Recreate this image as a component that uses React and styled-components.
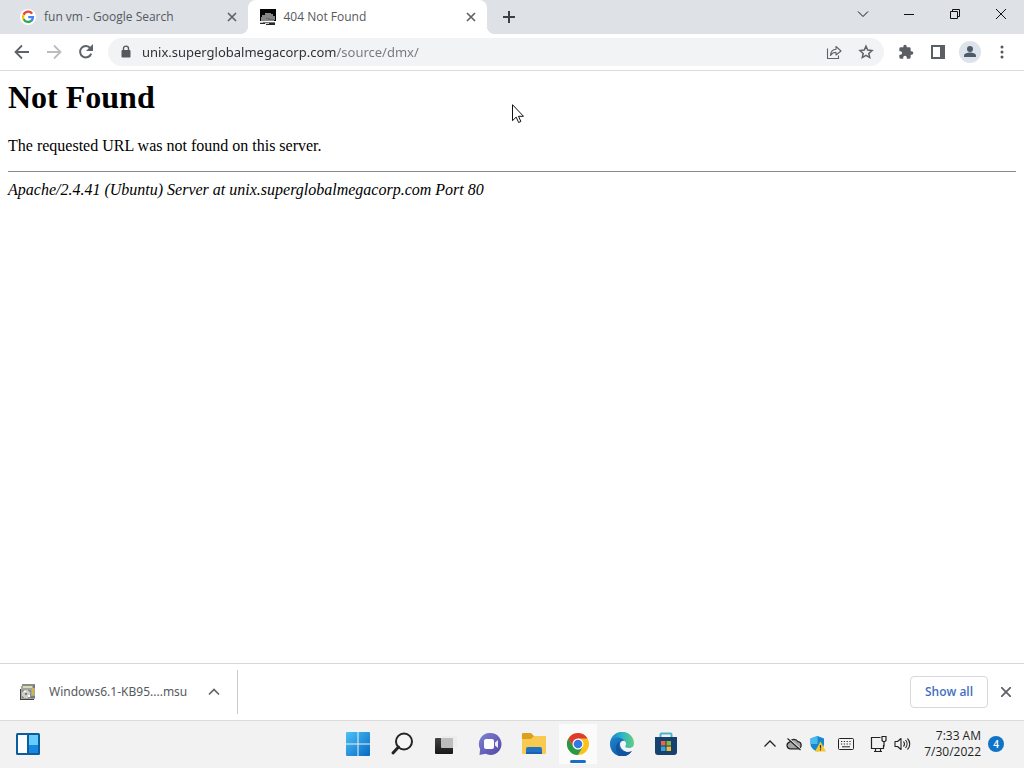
import React from "react";
import styled, { createGlobalStyle, css } from "styled-components";

const uiFont = `"Open Sans", "Noto Sans", sans-serif`;
const wideFont = `"Noto Sans", "Open Sans", sans-serif`;

const GlobalStyle = createGlobalStyle`
  *, *::before, *::after { box-sizing: border-box; }
  body { margin: 0; background: #fff; }
  button, input { font: inherit; color: inherit; }
  svg { display: block; flex: none; }
`;

const Screen = styled.div`
  display: flex;
  flex-direction: column;
  min-height: 100vh;
  font-family: ${uiFont};
  font-size: 12px;
  line-height: 16px;
  color: #3c4043;
`;

const IconButton = styled.button`
  display: flex;
  flex: none;
  align-items: center;
  justify-content: center;
  width: ${(p) => p.$w || 32}px;
  height: ${(p) => p.$h || 28}px;
  padding: 0;
  border: 0;
  border-radius: 4px;
  background: none;
  color: ${(p) => p.$color || "#5f6368"};
`;

/* ---------- tab strip ---------- */

const TabStrip = styled.header`
  display: flex;
  height: 34px;
  padding-left: 8px;
  background: #dee1e6;
`;

const Tabs = styled.div`
  display: flex;
  flex: 0 1 479px;
  min-width: 0;
`;

const Tab = styled.div`
  position: relative;
  display: flex;
  flex: 1 1 0;
  align-items: center;
  min-width: 0;
  padding: 0 6px 0 12px;
  border-radius: 8px 8px 0 0;
  ${(p) =>
    p.$active &&
    css`
      background: #fff;
      &::before,
      &::after {
        content: "";
        position: absolute;
        bottom: 0;
        width: 8px;
        height: 8px;
      }
      &::before {
        right: 100%;
        background: radial-gradient(circle at 0 0, transparent 8px, #fff 8px);
      }
      &::after {
        left: 100%;
        background: radial-gradient(circle at 100% 0, transparent 8px, #fff 8px);
      }
    `}
`;

const TabLabel = styled.button`
  display: flex;
  flex: 1;
  align-items: center;
  gap: 8px;
  min-width: 0;
  height: 34px;
  padding: 0;
  border: 0;
  background: none;
  color: #55595e;
  white-space: nowrap;
`;

const WindowControls = styled.div`
  display: flex;
  margin-left: auto;
`;

/* ---------- toolbar ---------- */

const Toolbar = styled.nav`
  display: flex;
  align-items: center;
  height: 37px;
  padding: 0 6px;
  border-bottom: 1px solid #dadce0;
  background: #fff;
`;

const Omnibox = styled.label`
  display: flex;
  flex: 1;
  align-items: center;
  min-width: 0;
  height: 28px;
  margin: 0 6px;
  padding: 0 2px 0 13px;
  border-radius: 14px;
  background: #f1f3f4;
`;

const UrlInput = styled.input`
  flex: 1;
  min-width: 0;
  height: 28px;
  margin-left: 11px;
  padding: 0;
  border: 0;
  outline: 0;
  font-family: ${wideFont};
  font-size: 13px;
  color: transparent;
  background: linear-gradient(90deg, #2c2e31 194px, #73787d 194px);
  -webkit-background-clip: text;
  background-clip: text;
`;

/* ---------- page ---------- */

const Page = styled.main`
  position: relative;
  flex: 1;
  padding: 8px;
  background: #fff;
  color: #000;
  font-family: "Liberation Serif", serif;
  font-size: 16px;
  line-height: 18px;
`;

const Title = styled.h1`
  margin: 0 0 21px;
  font-size: 32px;
  line-height: 37px;
`;

const Message = styled.p`
  margin: 0 0 16px;
`;

const Rule = styled.hr`
  height: 1px;
  margin: 0 0 9px;
  border: 0;
  background: #8a8a8a;
`;

const Pointer = styled.svg`
  position: absolute;
  left: 512px;
  top: 33px;
`;

/* ---------- download shelf ---------- */

const Shelf = styled.section`
  display: flex;
  align-items: center;
  height: 57px;
  padding: 0 2px 0 20px;
  border-top: 1px solid #d5d7da;
  background: #fff;
`;

const Download = styled.div`
  display: flex;
  align-items: center;
  height: 44px;
  padding-right: 7px;
  border-right: 1px solid #c8cacd;
`;

const FileButton = styled.button`
  display: flex;
  align-items: center;
  gap: 13px;
  height: 32px;
  margin-right: 11px;
  padding: 0;
  border: 0;
  background: none;
  color: #55595e;
  font-family: ${wideFont};
`;

const ShowAll = styled.button`
  width: 78px;
  height: 32px;
  margin-left: auto;
  margin-right: 2px;
  padding: 0;
  border: 1px solid #d5d8dc;
  border-radius: 4px;
  background: #fff;
  color: #4470c0;
  font-weight: 600;
`;

/* ---------- taskbar ---------- */

const Taskbar = styled.footer`
  display: grid;
  grid-template-columns: 1fr auto 1fr;
  align-items: center;
  height: 48px;
  box-shadow: inset 0 1px #dcdcdc;
  background: #f2f2f2;
`;

const Start = styled.div`
  padding-left: 6px;
`;

const Apps = styled.div`
  display: flex;
`;

const AppButton = styled(IconButton)`
  position: relative;
  width: 44px;
  height: 48px;
  ${(p) =>
    p.$active &&
    css`
      background: linear-gradient(#fbfbfb, #fbfbfb) center / 38px 40px no-repeat;
      &::after {
        content: "";
        position: absolute;
        bottom: 5px;
        width: 16px;
        height: 3px;
        border-radius: 2px;
        background: #1a6fc4;
      }
    `}
`;

const Tray = styled.div`
  display: flex;
  align-items: center;
  justify-content: flex-end;
  padding-right: 20px;
`;

const Clock = styled.button`
  margin: 0 7px 0 14px;
  padding: 0;
  border: 0;
  background: none;
  color: #1f1f1f;
  font-size: 12px;
  line-height: 16px;
  text-align: right;
  white-space: nowrap;
`;

const Badge = styled.button`
  width: 16px;
  height: 16px;
  padding: 0;
  border: 0;
  border-radius: 8px;
  background: #0f74c8;
  color: #fff;
  font-size: 10px;
  font-weight: 600;
  line-height: 16px;
`;

/* ---------- drawings ---------- */

const Stroke = ({ d, s = 16, w = 1, children, ...rest }) => (
  <svg width={s} height={s} viewBox={`0 0 ${s} ${s}`} fill="none" stroke="currentColor" strokeWidth={w} {...rest}>
    <path d={d} />
    {children}
  </svg>
);

const CloseIcon = () => <Stroke s={10} w={1.7} d="M1 1l8 8M9 1l-8 8" />;

const GoogleIcon = () => (
  <svg width="16" height="16" viewBox="0 0 16 16">
    <circle cx="8" cy="8" r="8" fill="#fff" />
    <g fill="none" strokeWidth="2.3">
      <path d="M12.2 4.6A5 5 0 0 0 3.6 5.8" stroke="#ea4335" />
      <path d="M3.6 5.7a5 5 0 0 0 0 4.7" stroke="#fbbc05" />
      <path d="M3.6 10.3a5 5 0 0 0 7.8 1.4" stroke="#34a853" />
      <path d="M11.3 11.8A5 5 0 0 0 13 8.1H8.2" stroke="#4285f4" />
    </g>
  </svg>
);

const CloudFavicon = () => (
  <svg width="16" height="16" viewBox="0 0 16 16" shapeRendering="crispEdges">
    <path d="M0 0h16v12H0z" fill="#050505" />
    <path d="M5 4h6v1h2v2h2v4h-1v1H1V8h1V6h3z" fill="#858585" />
    <path d="M6 9h4v1h4v1H8v-1H6z" fill="#6c6c6c" />
    <path d="M0 12h5v1H0z" fill="#eee" />
    <path d="M2 13h13v1H2z" fill="#777" />
    <path d="M0 14h5v1H0zM6 14h9v2H6z" fill="#282828" />
    <path d="M0 13h3v1H0zM5 14h4v1H5z" fill="#ccc" />
  </svg>
);

const ReloadIcon = () => (
  <Stroke w={2} d="M13.2 9.6A5.7 5.7 0 1 1 12.4 4.3L13.5 5.5">
    <path d="M15 0v7H8z" fill="currentColor" stroke="none" />
  </Stroke>
);

const LockIcon = () => (
  <svg width="10" height="14" viewBox="0 0 10 14">
    <rect x=".5" y="5" width="9" height="7.500" rx="1" fill="#55595e" />
    <path d="M2.500 6V3.600a2.500 2.500 0 0 1 5 0V6" fill="none" stroke="#55595e" strokeWidth="1.400" />
  </svg>
);

const ShareIcon = () => (
  <Stroke w={1.1} d="M1.500 4.500v10h11v-3">
    <path d="M4.500 11.500c.3-4 2.500-6 5.500-6.200V2.500L15 7l-5 4V8.300c-2.500 0-4 .8-5.500 3.200z" strokeLinejoin="round" />
  </Stroke>
);

const StarIcon = () => (
  <Stroke w={1.5} d="M8 2.200l1.700 3.900 4.300.4-3.200 2.900.9 4.200L8 11.400l-3.700 2.200.9-4.200L2 6.500l4.300-.4z" />
);

const PuzzleIcon = () => (
  <svg width="16" height="16" viewBox="0 0 24 24" fill="#5b5f64">
    <path d="M20.500 11H19V7a2 2 0 0 0-2-2h-4V3.500a2.500 2.500 0 0 0-5 0V5H4a2 2 0 0 0-2 2v3.800h1.500a2.700 2.700 0 0 1 0 5.400H2V20a2 2 0 0 0 2 2h3.800v-1.500a2.700 2.700 0 0 1 5.400 0V22H17a2 2 0 0 0 2-2v-4h1.500a2.500 2.500 0 0 0 0-5z" />
  </svg>
);

const PanelIcon = () => (
  <svg width="14" height="14" viewBox="0 0 14 14">
    <path d="M1 1h12v12H1z" fill="#fff" stroke="#5b5f64" strokeWidth="2" />
    <path d="M9 0h5v14H9z" fill="#5b5f64" />
  </svg>
);

const AvatarIcon = () => (
  <svg width="22" height="22" viewBox="0 0 22 22">
    <circle cx="11" cy="11" r="11" fill="#dde3ea" />
    <circle cx="11" cy="8" r="3" fill="#4b5b6b" />
    <path d="M5 16v-1.500c0-2 3.500-3 6-3s6 1 6 3V16z" fill="#4b5b6b" />
  </svg>
);

const InstallerIcon = () => (
  <svg width="16" height="16" viewBox="0 0 16 16" shapeRendering="crispEdges">
    <path d="M2 0h13v2H2z" fill="#8d8d86" />
    <path d="M1 2h14v13H1z" fill="#a5a59a" />
    <path d="M0 5h1v11H0zM1 15h13v1H1z" fill="#43433f" />
    <path d="M3 2h9v2H3z" fill="#d9d9bb" />
    <path d="M12 3h2v8h-2z" fill="#cfb74a" />
    <path d="M13 1h2v3h-2zM11 12h4v2h-4z" fill="#6d7d91" />
    <path d="M2 6h9v8H2z" fill="#8b8d8d" />
    <circle cx="6" cy="10" r="4" fill="#cfcfc8" />
    <circle cx="6" cy="10" r="1.500" fill="#787c80" />
    <path d="M4 7h2v1H4zM8 11h2v2H8z" fill="#fff" />
  </svg>
);

const WidgetsIcon = () => (
  <svg width="24" height="22" viewBox="0 0 24 22">
    <rect width="24" height="22" rx="1.500" fill="#0c5c9e" />
    <path d="M2 2h9v18H2z" fill="#fbfdff" />
    <path d="M13 2h9v10h-9z" fill="#66cdfc" />
    <path d="M13 12h9v8h-9z" fill="#1589e2" />
  </svg>
);

const WindowsIcon = () => (
  <svg width="24" height="24" viewBox="0 0 24 24">
    <defs>
      <linearGradient id="win" x2="1" y2="1">
        <stop stopColor="#4cc2f7" />
        <stop offset="1" stopColor="#0669c3" />
      </linearGradient>
    </defs>
    <path fill="url(#win)" d="M1 0h10.500v11.500H0V1a1 1 0 0 1 1-1zM12.500 0H23a1 1 0 0 1 1 1v10.500H12.500zM0 12.500h11.500V24H1a1 1 0 0 1-1-1zM12.500 12.500H24V23a1 1 0 0 1-1 1H12.500z" />
  </svg>
);

const SearchIcon = () => (
  <svg width="24" height="24" viewBox="0 0 24 24" fill="none" stroke="#242424">
    <circle cx="14" cy="9.500" r="8" fill="#f5f5f5" strokeWidth="2" />
    <path d="M8.500 15L3 21" strokeWidth="3" strokeLinecap="round" />
  </svg>
);

const TaskViewIcon = () => (
  <svg width="24" height="24" viewBox="0 0 24 24">
    <defs>
      <linearGradient id="tv" x2="0" y2="1">
        <stop stopColor="#444" />
        <stop offset="1" stopColor="#171717" />
      </linearGradient>
    </defs>
    <path d="M8 4h15v11H8z" fill="#ececec" />
    <rect x="1" y="6" width="18" height="16" rx="1" fill="url(#tv)" />
    <path d="M7 6h12v10H8a1 1 0 0 1-1-1z" fill="#bdbdbd" />
  </svg>
);

const ChatIcon = () => (
  <svg width="24" height="24" viewBox="0 0 24 24">
    <defs>
      <linearGradient id="chat" x2="1" y2="1">
        <stop stopColor="#7e85cf" />
        <stop offset="1" stopColor="#5145a8" />
      </linearGradient>
    </defs>
    <path d="M12.500 1a11 11 0 1 1-5 20.800L1.500 23l.6-6A11 11 0 0 1 12.500 1z" fill="url(#chat)" />
    <rect x="6" y="7" width="10" height="10" rx="2" fill="#fff" />
    <path d="M17 10.500l3-2.500v8l-3-2.500z" fill="#eceafd" />
  </svg>
);

const FolderIcon = () => (
  <svg width="24" height="24" viewBox="0 0 24 24">
    <path d="M1 1h8l3 3h11a1 1 0 0 1 1 1v6H0V2a1 1 0 0 1 1-1z" fill="#dda01d" />
    <path d="M0 7h9l3-3h11a1 1 0 0 1 1 1v16a1 1 0 0 1-1 1H1a1 1 0 0 1-1-1z" fill="#f8cb50" />
    <path d="M4 22v-5a2 2 0 0 1 2-2h12a2 2 0 0 1 2 2v5z" fill="#2272c3" />
    <path d="M4 20h16v2H4z" fill="#1a62ad" />
  </svg>
);

const ChromeIcon = () => (
  <svg width="22" height="22" viewBox="0 0 22 22">
    <circle cx="11" cy="11" r="11" fill="#fbc318" />
    <path d="M11 22A11 11 0 0 1 1.470 5.500L6.200 13.700 11 16.500l4.800-2.700z" fill="#269a46" />
    <path d="M1.470 5.500A11 11 0 0 1 20.530 5.500H11L6.200 13.700z" fill="#e13a2f" />
    <circle cx="11" cy="11" r="5.500" fill="#fff" />
    <circle cx="11" cy="11" r="4.300" fill="#3678e3" />
  </svg>
);

const EdgeIcon = () => (
  <svg width="24" height="24" viewBox="0 0 24 24">
    <defs>
      <linearGradient id="edgeTop" x2="1" y2="0">
        <stop stopColor="#1480c6" />
        <stop offset=".5" stopColor="#2fb4c8" />
        <stop offset="1" stopColor="#62cf7c" />
      </linearGradient>
      <linearGradient id="edgeLow" x2="1" y2="1">
        <stop stopColor="#1c85d2" />
        <stop offset="1" stopColor="#10488f" />
      </linearGradient>
    </defs>
    <path d="M0 12A12 12 0 0 1 24 11.500c0 3-2.200 5-5.500 5-3 0-4.500-1.200-3.700-2.200 2-2.300-.2-5.800-4.300-5.800C5 8.500 1 12 0 12z" fill="url(#edgeTop)" />
    <path d="M0 12c.4-4.300 4-6.400 7.500-6.400 4 0 7.200 2.300 7.600 5.500l-3.100 3 5 6.200c2 0 3.800-.7 5.300-1.700A12 12 0 0 1 0 12z" fill="url(#edgeLow)" />
    <path d="M10.500 9c-3.800 4-1.300 11 5.500 11 2.500 0 4.800-.4 6.300-1.400-2.500 4-7.700 6.200-12.300 5.200C4 20 5 11.500 10.500 9z" fill="#14539f" />
    <path d="M10 12c0-3 4-4.400 5.600-2 .8 1.600.3 3-.3 4-.6 1.200.9 2 3.400 2 1.900 0 3.700-.6 5.300-2v3.500c-1.500 1.500-4 2.300-6.500 2.200-4.300-.2-7.500-3.500-7.500-7.700z" fill="#f2f4f5" />
  </svg>
);

const StoreIcon = () => (
  <svg width="24" height="24" viewBox="0 0 24 24">
    <path d="M6.500 6V2.500a1 1 0 0 1 1-1h9a1 1 0 0 1 1 1V6" fill="none" stroke="#4ab4cf" strokeWidth="2" />
    <path d="M1 5h22v15a3 3 0 0 1-3 3H4a3 3 0 0 1-3-3z" fill="#17416f" />
    <path d="M7 9h4.500v4.500H7z" fill="#e8673f" />
    <path d="M12.500 9H17v4.500h-4.500z" fill="#8ab83e" />
    <path d="M7 14.500h4.500V19H7z" fill="#35a5d8" />
    <path d="M12.500 14.500H17V19h-4.500z" fill="#efbb32" />
  </svg>
);

const CloudOffIcon = () => (
  <svg width="16" height="16" viewBox="0 0 16 16" fill="#a5a5a5" stroke="#222" strokeWidth="1.200">
    <path d="M4 12.800a3.400 3.400 0 0 1-.3-6.700A4.700 4.700 0 0 1 12 5.700a3.600 3.600 0 0 1 .3 7.100z" />
    <path d="M3 2.500l12 11" stroke="#f2f2f2" />
    <path d="M1.500 2.500l13 11.500" />
  </svg>
);

const ShieldIcon = () => (
  <svg width="16" height="16" viewBox="0 0 16 16">
    <path d="M7.500 0L14 2.500V8c0 3.500-3 6-6.500 7.500C3.500 14 .5 11.500.5 8V2.500z" fill="#1589d0" />
    <path d="M7.500 0v8H.5V2.500z" fill="#49baf0" />
    <path d="M10.500 5.500l5.500 10H5z" fill="#fbc72e" />
    <path d="M9.900 9h1.200v3.500H9.900zM9.900 13.300h1.200v1.200H9.900z" fill="#333" />
  </svg>
);

const KeyboardIcon = () => (
  <svg width="16" height="12" viewBox="0 0 16 12" fill="none" stroke="#222">
    <rect x=".5" y=".5" width="15" height="11" rx="1" />
    <path d="M3 3.500h11M3 6h10" strokeWidth="1.200" strokeDasharray="1.200 1.600" />
    <path d="M4 8.800h8" />
  </svg>
);

const NetworkIcon = () => (
  <svg width="17" height="16" viewBox="0 0 17 16" fill="none" stroke="#222">
    <path d="M10.500 1.500h-9v11h12V9M4 15.500h8M5.500 12.500v3M10.500 12.500v3" strokeWidth="1.200" />
    <path d="M12 .5h4v4l-1 1h-2l-1-1zM14 5.500v5" strokeWidth="1.200" />
  </svg>
);

const VolumeIcon = () => (
  <svg width="17" height="16" viewBox="0 0 17 16" fill="none" stroke="#222" strokeWidth="1.100">
    <path d="M1 5.500h2.500L7 2.500v11l-3.500-3H1z" strokeLinejoin="round" />
    <path d="M9.500 5.500c1.200 1.500 1.200 3.500 0 5M11.500 4c2 2.300 2 5.700 0 8M13.500 2.500c3 3.200 3 7.800 0 11" />
  </svg>
);

const apps = [
  ["Start", WindowsIcon],
  ["Search", SearchIcon],
  ["Task View", TaskViewIcon],
  ["Chat", ChatIcon],
  ["File Explorer", FolderIcon],
  ["Google Chrome", ChromeIcon],
  ["Microsoft Edge", EdgeIcon],
  ["Microsoft Store", StoreIcon],
];

const tabs = [
  ["fun vm - Google Search", GoogleIcon, false],
  ["404 Not Found", CloudFavicon, true],
];

export default function App() {
  return (
    <Screen>
      <GlobalStyle />
      <TabStrip>
        <Tabs role="tablist">
          {tabs.map(([label, Icon, active]) => (
            <Tab key={label} $active={active}>
              <TabLabel role="tab" aria-selected={active}>
                <Icon />
                {label}
              </TabLabel>
              <IconButton $w={20} $h={20} aria-label={`Close ${label}`}>
                <CloseIcon />
              </IconButton>
            </Tab>
          ))}
        </Tabs>
        <IconButton $w={44} $h={34} $color="#3c4043" aria-label="New tab">
          <Stroke s={12} w={2} d="M6 0v12M0 6h12" />
        </IconButton>
        <WindowControls>
          <IconButton $w={46} $h={28} $color="#111" aria-label="Search tabs">
            <Stroke s={12} d="M1 3.500l5 5 5-5" />
          </IconButton>
          <IconButton $w={46} $h={28} $color="#111" aria-label="Minimize">
            <Stroke s={10} d="M0 5.500h10" />
          </IconButton>
          <IconButton $w={46} $h={28} $color="#111" aria-label="Restore">
            <Stroke s={10} d="M.5 2.500h7v7h-7zM2.500 2.500v-2h7v7h-2" />
          </IconButton>
          <IconButton $w={46} $h={28} $color="#111" aria-label="Close window">
            <Stroke s={12} d="M1 1l10 10M11 1L1 11" />
          </IconButton>
        </WindowControls>
      </TabStrip>

      <Toolbar>
        <IconButton aria-label="Back">
          <Stroke w={1.8} d="M15 8H2M8 1.500L1.500 8 8 14.500" />
        </IconButton>
        <IconButton $color="#babcbe" aria-label="Forward">
          <Stroke w={1.8} d="M1 8h13M8 1.500L14.500 8 8 14.500" />
        </IconButton>
        <IconButton aria-label="Reload">
          <ReloadIcon />
        </IconButton>
        <Omnibox>
          <LockIcon />
          <UrlInput aria-label="Address" defaultValue="unix.superglobalmegacorp.com/source/dmx/" spellCheck={false} />
          <IconButton aria-label="Share">
            <ShareIcon />
          </IconButton>
          <IconButton aria-label="Bookmark">
            <StarIcon />
          </IconButton>
        </Omnibox>
        <IconButton aria-label="Extensions">
          <PuzzleIcon />
        </IconButton>
        <IconButton aria-label="Side panel">
          <PanelIcon />
        </IconButton>
        <IconButton aria-label="Profile">
          <AvatarIcon />
        </IconButton>
        <IconButton aria-label="Menu">
          <svg width="4" height="14" viewBox="0 0 4 14" fill="#54585d">
            <circle cx="2" cy="2" r="1.500" />
            <circle cx="2" cy="7" r="1.500" />
            <circle cx="2" cy="12" r="1.500" />
          </svg>
        </IconButton>
      </Toolbar>

      <Page>
        <Title>Not Found</Title>
        <Message>The requested URL was not found on this server.</Message>
        <Rule />
        <address>Apache/2.4.41 (Ubuntu) Server at unix.superglobalmegacorp.com Port 80</address>
        <Pointer width="12" height="20" viewBox="0 0 12 20">
          <path d="M.5.700v16l3.700-3.600 2.400 5.400 2.300-1-2.400-5.200h5z" fill="#fff" stroke="#111" />
        </Pointer>
      </Page>

      <Shelf>
        <Download>
          <FileButton>
            <InstallerIcon />
            Windows6.1-KB95....msu
          </FileButton>
          <IconButton aria-label="Download options">
            <Stroke s={12} w={1.7} d="M1 8.500l5-5 5 5" />
          </IconButton>
        </Download>
        <ShowAll>Show all</ShowAll>
        <IconButton aria-label="Close downloads">
          <Stroke s={10} w={1.8} d="M0 0l10 10M10 0L0 10" />
        </IconButton>
      </Shelf>

      <Taskbar>
        <Start>
          <AppButton aria-label="Widgets">
            <WidgetsIcon />
          </AppButton>
        </Start>
        <Apps>
          {apps.map(([label, Icon]) => (
            <AppButton key={label} aria-label={label} $active={label === "Google Chrome"}>
              <Icon />
            </AppButton>
          ))}
        </Apps>
        <Tray>
          <IconButton $w={24} $color="#222" aria-label="Hidden icons">
            <Stroke s={12} w={1.3} d="M.5 8.500L6 3l5.500 5.500" />
          </IconButton>
          <IconButton $w={24} aria-label="OneDrive">
            <CloudOffIcon />
          </IconButton>
          <IconButton $w={24} aria-label="Windows Security">
            <ShieldIcon />
          </IconButton>
          <IconButton $w={32} aria-label="Touch keyboard">
            <KeyboardIcon />
          </IconButton>
          <IconButton $w={32} aria-label="Network">
            <NetworkIcon />
          </IconButton>
          <IconButton $w={16} aria-label="Volume">
            <VolumeIcon />
          </IconButton>
          <Clock>
            7:33 AM
            <br />
            7/30/2022
          </Clock>
          <Badge aria-label="4 notifications">4</Badge>
        </Tray>
      </Taskbar>
    </Screen>
  );
}
